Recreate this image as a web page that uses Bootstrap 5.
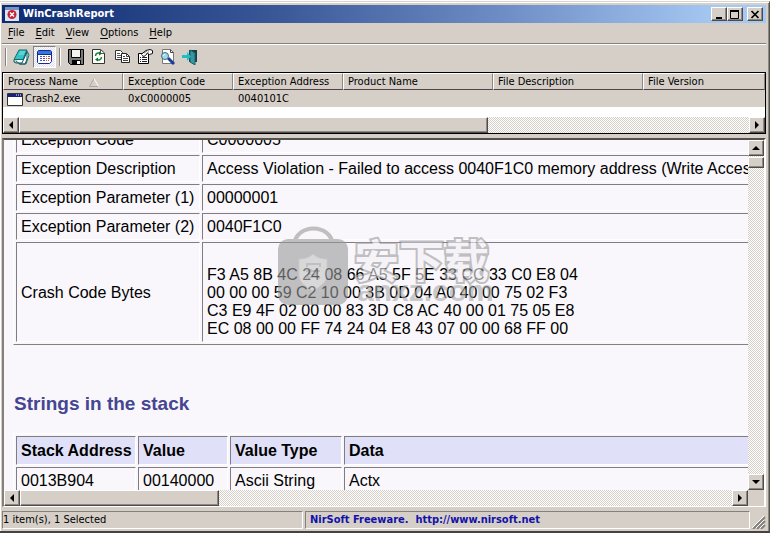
<!DOCTYPE html>
<html lang="en">
<head>
<meta charset="utf-8">
<meta name="viewport" content="width=device-width, initial-scale=1">
<title>WinCrashReport</title>
<link href="https://cdn.jsdelivr.net/npm/bootstrap@5.3.0/dist/css/bootstrap.min.css" rel="stylesheet">
<style>
:root{--face:#d5cfc8;--ui:"DejaVu Sans Condensed","DejaVu Sans",sans-serif}
body{background:#fff;font:11px/14px var(--ui);color:#000}
button{color:#000;font:inherit;border-radius:0}
svg{display:block}
.app-window{height:calc(100vh - 1px);margin:1px 3px 0 0;background:var(--face);border-top:1px solid #d8d4ce;border-right:1px solid #55504e;border-bottom:2px solid #464242;box-shadow:inset 1px 1px #fff,inset -1px 0 #8b8783;padding:3px 3px 2px 2px}
.title-bar{height:18px;background:linear-gradient(90deg,#0c2b70,#3a5898 36%,#6f8ec6 66%,#a6c9f3 94%);color:#fff;font-weight:700;padding:0 3px}
.raised{background:var(--face);border:1px solid;border-color:#fff #504b4a #504b4a #fff;box-shadow:inset -1px -1px #8d8883;padding:0;display:flex;align-items:center;justify-content:center;flex:none}
.win-btn{width:16px;height:14px}
.menu-bar{height:20px;padding:0 6px;gap:11px}
.menu-bar button,.tool{border:0;background:none;padding:0}
.menu-bar u{text-underline-offset:2px}
.rule{height:2px;flex:none;border-top:1px solid #85807b;border-bottom:1px solid #fff}
.tool-bar{height:27px;padding:0 0 4px}
.sep{width:2px;height:18px;margin:0 3px;border-left:1px solid #85807b;border-right:1px solid #fff}
.tool{width:23px;height:22px;display:flex;align-items:center;justify-content:center}
.dither{background:repeating-conic-gradient(#fff 0 25%,#d5cfc8 0 50%) 0 0/2px 2px}
.tool.pressed{border:1px solid;border-color:#85807b #fff #fff #85807b;background:repeating-conic-gradient(#fff 0 25%,#dcdcf0 0 50%) 0 0/2px 2px}
.list-pane{height:62px;border:1px solid #000;background:#fff;flex:none}
.list-grid{table-layout:fixed;width:100%;min-width:740px;border-collapse:separate;border-spacing:0}
.list-grid th{height:17px;padding:1px 4px 0;font-weight:400;background:var(--face);border:1px solid;border-color:#fff #8b8783 #504448 #fff;line-height:14px;white-space:nowrap}
.list-grid td{height:17px;padding:2px 5px 1px;background:#d6cfc8;line-height:14px}
.list-grid td:first-child{padding:2px 4px 1px}
.file-cell{gap:2px}
.c120{width:120px}.c110{width:110px}.c150{width:150px}
.bar{width:16px;height:16px}
.hbar{height:16px}
.report-pane{border:2px solid;border-color:#55504e #fff #fff #85807b;border-bottom-width:1px;margin-top:4px;min-height:0}
.report-view{background:#f9f7fb;font:16px/18px "Liberation Sans",Arial,sans-serif;min-width:0}
.report-body{width:900px;margin-top:-17px;padding:0 9px}
.report-grid{border:1px solid;border-color:#fff #85807b #85807b #fff;border-collapse:separate;border-spacing:2px 2px;width:100%;table-layout:fixed}
.report-grid th,.report-grid td{border:1px solid;border-color:#807c82 #fff #fff #807c82;padding:4px 4px 3px;text-align:left;white-space:nowrap;vertical-align:middle}
.report-grid thead th{background:#e0e0f8;padding:5px 4px 4px}
.k184{width:184px}.k120{width:120px}.k90{width:90px}.k112{width:112px}
.report-body h2{font:700 19px/22px "Liberation Sans",Arial,sans-serif;color:#454590;margin:48px 1px 18px}
.crash-bytes{height:100px}
.vthumb{width:16px;height:11px;margin-top:1px}
.status-bar{height:18px;margin-top:4px;gap:2px}
.field{border:1px solid;border-color:#85807b #fff #fff #85807b;padding:1px 4px 0 0;white-space:nowrap}
.f-left{width:301px}
.f-right a{color:#1212a8;font-weight:700;text-decoration:none;padding-left:4px}
.watermark{left:278px;top:225px;opacity:.6;pointer-events:none}
.wm-name{font:700 45px/46px "Noto Sans CJK SC",sans-serif;color:#f3f1f5;-webkit-text-stroke:4px #999;paint-order:stroke fill;white-space:nowrap}
.wm-site{font:700 30px/24px "Liberation Sans",sans-serif;color:#aaa;margin-top:-3px;padding-left:3px}
.wm-copy{margin:11px 0 0 5px}
</style>
<script src="https://cdn.jsdelivr.net/npm/bootstrap@5.3.0/dist/js/bootstrap.bundle.min.js"></script>
</head>
<body class="overflow-hidden">
<div class="app-window d-flex flex-column">
  <header class="title-bar d-flex align-items-center flex-shrink-0">
    <svg width="14" height="14" viewBox="0 0 14 14"><path fill="#dce4f4" d="M0 0h14v14H0z"/><path fill="#7991c4" d="M0 0h14v3H0z"/><circle cx="7" cy="7.500" r="4.500" fill="#c42334"/><path d="m5 5.500 4 4m0-4-4 4" stroke="#fff" stroke-width="1.500"/></svg>
    <span class="ms-1 flex-grow-1">WinCrashReport</span>
    <button class="raised win-btn" aria-label="Minimize"><svg width="10" height="9"><path d="M2 7h6v2H2z"/></svg></button>
    <button class="raised win-btn" aria-label="Maximize"><svg width="10" height="9"><path d="M.5 1h8v7.500h-8zM0 1h9" fill="none" stroke="#000"/><path d="M0 0h9v2H0z"/></svg></button>
    <button class="raised win-btn ms-1" aria-label="Close"><svg width="10" height="9"><path d="m1.500 1 7 7m0-7-7 7" stroke="#000" stroke-width="1.700"/></svg></button>
  </header>
  <nav class="menu-bar d-flex align-items-center flex-shrink-0">
    <button><u>F</u>ile</button><button><u>E</u>dit</button><button><u>V</u>iew</button><button><u>O</u>ptions</button><button><u>H</u>elp</button>
  </nav>
  <div class="rule"></div>
  <div class="tool-bar d-flex align-items-center flex-shrink-0">
    <span class="sep"></span>
    <button class="tool" aria-label="Report view"><svg width="17" height="16" viewBox="0 0 17 16"><path d="M3 12 7 15h6l3-9-2-4" fill="#fff" stroke="#147078"/><path d="M6 1h8l-4 9.500H1z" fill="#35c4c4" stroke="#126b72"/><path d="M1 11v2l2 1h6l5-11v7l-2 5H6" fill="none" stroke="#0c575d"/><path d="M7 3h5M6 5h5" stroke="#88e5e2"/></svg></button>
    <button class="tool pressed" aria-label="Table view"><svg width="15" height="14" viewBox="0 0 15 14"><path d="M1.500.500h12l1 1v10l-2 2h-11l-1-1V1.500z" fill="#fff" stroke="#18288e"/><path d="M1 1h13v3H1z" fill="#3278db"/><path d="M1 4.500h13" stroke="#18288e"/><path d="M3 6.500h2m1 0h2M3 8.500h2m1 0h2M3 10.500h2m1 0h2" stroke="#4452b8"/><path d="M9 6.500h1m1 0h2M9 8.500h1m1 0h2M9 10.500h1m1 0h1" stroke="#c05438"/></svg></button>
    <span class="sep"></span>
    <button class="tool" aria-label="Save"><svg width="16" height="16" viewBox="0 0 16 16"><path d="M.500.500h15v15H2.500l-2-2z" fill="#77797a" stroke="#000"/><path d="M3.500.500h9v8h-9z" fill="#f3f3f3" stroke="#000"/><path d="M4 11h9v5H4z" fill="#000"/><path d="M9 12h3v3H9z" fill="#fff"/></svg></button>
    <button class="tool" aria-label="Refresh"><svg width="13" height="15" viewBox="0 0 13 15"><path d="M.500.500h8l4 3.500v10.500H.500z" fill="#fff" stroke="#333"/><path d="M8.500.500v4h4" fill="none" stroke="#555"/><path d="M3.500 7c0-3 3-3.500 4.500-2.500M9.500 8c0 3-3 3.500-4.500 2.500" fill="none" stroke="#168533" stroke-width="1.500"/><path d="M7 2.500v4l3-2zM6 12.500v-4l-3 2z" fill="#0d7527"/></svg></button>
    <button class="tool" aria-label="Copy"><svg width="16" height="15" viewBox="0 0 16 15"><path d="M1.500 1.500h5l2 2v7h-7z" fill="#fff" stroke="#333"/><path d="M3 4.500h3M3 6.500h4M3 8.500h4" stroke="#555"/><path d="M7.500 4.500h5l3 3v6h-8z" fill="#fff" stroke="#222"/><path d="M12.500 4.500v3h3M9 7.500h2M9 9.500h5M9 11.500h5" fill="none" stroke="#444"/></svg></button>
    <button class="tool" aria-label="Properties"><svg width="16" height="16" viewBox="0 0 16 16"><path d="M1.500 4.500h10v10h-10z" fill="#fff" stroke="#000"/><path d="M3 8.500h1m1 0h5M3 10.500h1m1 0h5M3 12.500h1m1 0h5" stroke="#222"/><path d="m4 5.500 5-4 4-1 2.500 1v3l-3 1-2-1-3.500 3-2-1" fill="#fff" stroke="#111"/><path d="m7 4 3-2m-1 3 3-2.500" stroke="#777"/></svg></button>
    <button class="tool" aria-label="Find"><svg width="15" height="16" viewBox="0 0 15 16"><path d="M2.500.500h8l3 3v11h-11z" fill="#fff" stroke="#777"/><path d="M10.500.500v3h3" fill="none" stroke="#444"/><path d="m8 9 6 6" stroke="#163c99" stroke-width="3"/><circle cx="5" cy="7" r="3.500" fill="#9bdce8" stroke="#4d6680"/><path d="m3 7 2-2" stroke="#fff"/></svg></button>
    <button class="tool" aria-label="Exit"><svg width="17" height="16" viewBox="0 0 17 16"><path d="M7 1h8v12H7z" fill="#173f49"/><path d="m8 1 5 3v12l-5-3z" fill="#37979e" stroke="#1b616a"/><path d="M0 6h5V3l4 4.500L5 12V9H0z" fill="#22bdc4"/></svg></button>
  </div>

  <section class="list-pane d-flex flex-column">
    <div class="overflow-hidden flex-grow-1">
      <table class="list-grid">
        <thead><tr><th class="c120">Process Name <svg class="d-inline-block ms-2" width="10" height="9"><path d="M5 .500.500 8.500h9" fill="none" stroke="#aaa6a2"/><path d="m5 .500 4.500 8" stroke="#fff"/></svg></th><th class="c110">Exception Code</th><th class="c110">Exception Address</th><th class="c150">Product Name</th><th class="c150">File Description</th><th>File Version</th></tr></thead>
        <tbody><tr><td><div class="file-cell d-flex align-items-center"><svg class="flex-shrink-0" width="16" height="13"><path d="M.500.500h15v12H.500z" fill="#fff" stroke="#333"/><path d="M1 1h14v3H1z" fill="#19217c"/><path d="M9 2h1m1 0h1m1 0h1" stroke="#fff"/></svg>Crash2.exe</div></td><td>0xC0000005</td><td>0040101C</td><td></td><td></td><td></td></tr></tbody>
      </table>
    </div>
    <div class="hbar d-flex flex-shrink-0">
      <button class="raised bar" aria-label="Scroll list left"><svg width="4" height="8"><path d="M4 0v8L0 4z"/></svg></button>
      <div class="dither flex-grow-1"><div class="raised h-100" style="width:64.2%"></div></div>
      <button class="raised bar" aria-label="Scroll list right"><svg width="4" height="8"><path d="M0 0v8l4-4z"/></svg></button>
    </div>
  </section>

  <main class="report-pane d-flex flex-column flex-grow-1">
    <div class="d-flex flex-grow-1 overflow-hidden">
      <div class="report-view flex-grow-1 overflow-hidden">
        <div class="report-body">
          <table class="report-grid">
            <colgroup><col class="k184"><col></colgroup>
            <tbody>
            <tr><td>Exception Code</td><td>C0000005</td></tr>
            <tr><td>Exception Description</td><td>Access Violation - Failed to access 0040F1C0 memory address (Write Access)</td></tr>
            <tr><td>Exception Parameter (1)</td><td>00000001</td></tr>
            <tr><td>Exception Parameter (2)</td><td>0040F1C0</td></tr>
            <tr><td>Crash Code Bytes</td><td class="crash-bytes"><br>F3 A5 8B 4C 24 08 66 A5 5F 5E 33 CC 33 C0 E8 04<br>00 00 00 59 C2 10 00 3B 0D 04 A0 40 00 75 02 F3<br>C3 E9 4F 02 00 00 83 3D C8 AC 40 00 01 75 05 E8<br>EC 08 00 00 FF 74 24 04 E8 43 07 00 00 68 FF 00</td></tr>
            </tbody>
          </table>
          <h2>Strings in the stack</h2>
          <table class="report-grid">
            <colgroup><col class="k120"><col class="k90"><col class="k112"><col></colgroup>
            <thead><tr><th>Stack Address</th><th>Value</th><th>Value Type</th><th>Data</th></tr></thead>
            <tbody><tr><td>0013B904</td><td>00140000</td><td>Ascii String</td><td>Actx</td></tr></tbody>
          </table>
        </div>
      </div>
      <div class="dither d-flex flex-column flex-shrink-0">
        <button class="raised bar" aria-label="Scroll up"><svg width="8" height="4"><path d="M0 4h8L4 0z"/></svg></button>
        <div class="raised vthumb"></div>
        <button class="raised bar mt-auto" aria-label="Scroll down"><svg width="8" height="4"><path d="M0 0h8L4 4z"/></svg></button>
      </div>
    </div>
    <div class="hbar d-flex flex-shrink-0">
      <button class="raised bar" aria-label="Scroll left"><svg width="4" height="8"><path d="M4 0v8L0 4z"/></svg></button>
      <div class="dither flex-grow-1"><div class="raised h-100" style="width:28%"></div></div>
      <button class="raised bar" aria-label="Scroll right"><svg width="4" height="8"><path d="M0 0v8l4-4z"/></svg></button>
      <span class="bar"></span>
    </div>
  </main>

  <footer class="status-bar d-flex flex-shrink-0">
    <div class="field f-left">1 item(s), 1 Selected</div>
    <div class="field f-right flex-grow-1"><a href="http://www.nirsoft.net">NirSoft Freeware.&nbsp; http://www.nirsoft.net</a></div>
    <svg class="align-self-end" width="14" height="13"><path d="M1 13 13 1M5 13l8-8M9 13l4-4" stroke="#85807b" stroke-width="2"/><path d="M0 12 12 0M4 12l8-8M8 12l4-4" stroke="#fff"/></svg>
  </footer>
</div>
<div class="watermark position-absolute d-flex" aria-hidden="true">
  <svg width="71" height="82" viewBox="0 0 71 82"><path d="M16 20c2-22 37-22 39 0" fill="none" stroke="#9a9a9a" stroke-width="4"/><rect y="14" width="70" height="66" rx="10" fill="#999"/><path d="M35 29c4 4 9 5 14 5v16c0 8-8 12-14 16-6-4-14-8-14-16V34c5 0 10-1 14-5z" fill="#c4c4c4" stroke="#aaa"/><path d="M29 42v-3h13v3M28 46h14M33 44c-1 5-2 7-5 9m2-5 12 5m-3-7c-1 4-5 6-9 7" fill="none" stroke="#999" stroke-width="2"/></svg>
  <div class="wm-copy"><div class="wm-name">安下载</div><div class="wm-site">anxz.com</div></div>
</div>
</body>
</html>
